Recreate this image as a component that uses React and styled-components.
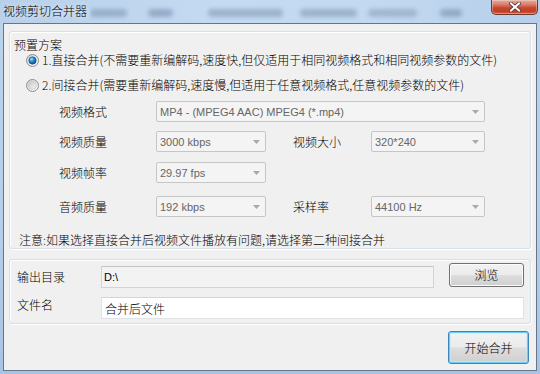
import React from "react";
import styled, { createGlobalStyle } from "styled-components";

const CJK = `"Noto Sans CJK SC", "Noto Sans", sans-serif`;
const UI = `"Liberation Sans", Arial, sans-serif`;

const Global = createGlobalStyle`
  html, body { margin: 0; padding: 0; background: #fff; }
  body { width: 540px; height: 374px; overflow: hidden; }
  * { box-sizing: border-box; }
`;

const Window = styled.div`
  width: 540px;
  height: 374px;
  display: flex;
  flex-direction: column;
  background: linear-gradient(to bottom, #bcd3ec 0%, #b6cee9 60%, #a9c3e3 100%);
  font-family: ${CJK};
  font-size: 12px;
  font-weight: 300;
  color: #000;
`;

const TitleBar = styled.div`
  height: 23px;
  flex: none;
  display: flex;
  align-items: flex-start;
  padding-left: 3px;
  background: linear-gradient(to right, #b9d0ea 0%, #c4daf2 40%, #c3d9f1 70%, #b6cee9 100%);
`;

const TitleText = styled.div`
  width: 87px;
  margin-top: 4px;
  line-height: 14px;
  white-space: nowrap;
  text-shadow: 0 0 5px rgba(255, 255, 255, 0.9);
`;

const Ghosts = styled.div`
  flex: 1;
  height: 23px;
  display: flex;
  align-items: center;
  overflow: hidden;
`;

const Ghost = styled.div`
  flex: none;
  width: ${(p) => p.$w}px;
  margin-left: ${(p) => p.$gap}px;
  height: 8px;
  margin-top: 2px;
  border-radius: 4px;
  background: rgba(95, 120, 150, ${(p) => p.$o});
  filter: blur(2px);
`;

const CloseBtn = styled.div`
  flex: none;
  width: 47px;
  height: 15px;
  margin-right: 2px;
  border: 1px solid #6e3b32;
  border-top: none;
  border-radius: 0 0 5px 5px;
  display: flex;
  align-items: center;
  justify-content: center;
  background: linear-gradient(to bottom, #e8a898 0%, #d98470 30%, #c8492f 55%, #c23d24 80%, #d2634a 100%);
  box-shadow: inset 0 0 0 1px rgba(255, 255, 255, 0.3);
`;

const Frame = styled.div`
  flex: 1;
  display: flex;
  padding: 0 3px 3px 3px;
  min-height: 0;
`;

const Client = styled.div`
  flex: 1;
  display: flex;
  flex-direction: column;
  background: #f0f0f0;
  border: 1px solid #63768c;
  padding: 7px 5px 0 5px;
`;

const Group = styled.div`
  flex: none;
  height: ${(p) => p.$h}px;
  margin-top: ${(p) => p.$mt || 0}px;
  border: 1px solid #d5dfe5;
  border-radius: 3px;
  box-shadow: inset 1px 1px 0 #fff, 1px 1px 0 #fff;
  display: flex;
  flex-direction: column;
`;

const SectionTitle = styled.div`
  margin: 6px 0 0 4px;
  line-height: 14px;
`;

const RadioRow = styled.div`
  height: 16px;
  margin: ${(p) => p.$mt}px 0 0 16px;
  display: flex;
  align-items: center;
  white-space: nowrap;
`;

const RadioLabel = styled.span`
  margin-left: 3px;
  line-height: 14px;
`;

const FormRow = styled.div`
  height: 21px;
  margin: ${(p) => p.$mt}px 0 0 49px;
  display: grid;
  grid-template-columns: 97px 110px 27px 78px 114px;
  align-items: center;
`;

const FieldLabel = styled.div`
  line-height: 14px;
  grid-column: ${(p) => (p.$col ? `${p.$col} / span 1` : "auto")};
`;

const Combo = styled.div`
  height: 21px;
  grid-column: ${(p) => (p.$wide ? "2 / span 4" : "auto")};
  border: 1px solid #c6c6c6;
  border-radius: 2px;
  background: #f4f4f4;
  display: flex;
  align-items: center;
  justify-content: space-between;
  padding: 0 5px 0 3px;
  font-family: ${UI};
  font-size: 11px;
  font-weight: 400;
  color: #666666;
  white-space: nowrap;
`;

const Note = styled.div`
  margin: 16px 0 0 9px;
  line-height: 14px;
  white-space: nowrap;
`;

const OutRow = styled.div`
  display: flex;
  align-items: flex-start;
  margin-top: ${(p) => p.$mt}px;
  padding-left: 7px;
`;

const OutLabel = styled.div`
  width: 84px;
  flex: none;
  margin-top: ${(p) => p.$mt}px;
  line-height: 14px;
`;

const TextBox = styled.div`
  flex: none;
  width: ${(p) => p.$w}px;
  height: 22px;
  margin-top: ${(p) => p.$mt || 0}px;
  border: 1px solid ${(p) => (p.$disabled ? "#d3d3d3" : "#dfe3e8")};
  border-top-color: ${(p) => (p.$disabled ? "#c4c4c4" : "#d2d6dc")};
  background: ${(p) => (p.$disabled ? "#f3f3f3" : "#ffffff")};
  display: flex;
  align-items: center;
  padding-left: ${(p) => (p.$disabled ? 2 : 3)}px;
  font-family: ${(p) => (p.$disabled ? UI : CJK)};
  font-size: ${(p) => (p.$disabled ? 11 : 12)}px;
  font-weight: ${(p) => (p.$disabled ? 400 : 300)};
  color: #000;
`;

const Button = styled.div`
  flex: none;
  width: ${(p) => p.$w}px;
  height: ${(p) => p.$h}px;
  margin-left: ${(p) => p.$ml || 0}px;
  border: 1px solid ${(p) => (p.$default ? "#3c86c0" : "#707070")};
  border-radius: 3px;
  background: linear-gradient(to bottom, #f2f2f2 0%, #ebebeb 48%, #dddddd 52%, #cfcfcf 100%);
  box-shadow: ${(p) =>
    p.$default
      ? "inset 0 0 0 1px #6ccdf4, inset 0 0 0 2px rgba(200, 235, 250, 0.55)"
      : "inset 0 0 0 1px #fbfbfb"};
  display: flex;
  align-items: center;
  justify-content: center;
  line-height: 14px;
  white-space: nowrap;
`;

const ButtonRow = styled.div`
  display: flex;
  justify-content: flex-end;
  margin-top: 7px;
  padding-right: 2px;
`;

function Radio({ checked, id }) {
  return (
    <svg width="13" height="13" viewBox="0 0 13 13" style={{ flex: "none" }}>
      <defs>
        <linearGradient id={`${id}o`} x1="0" y1="0" x2="1" y2="1">
          <stop offset="0" stopColor="#d0d0d0" />
          <stop offset="1" stopColor="#ffffff" />
        </linearGradient>
        <radialGradient id={`${id}on`} cx="0.38" cy="0.32" r="0.75">
          <stop offset="0" stopColor="#a8e6ff" />
          <stop offset="0.4" stopColor="#2a92d8" />
          <stop offset="1" stopColor="#0a3f7a" />
        </radialGradient>
        <linearGradient id={`${id}off`} x1="0" y1="0" x2="1" y2="1">
          <stop offset="0" stopColor="#c8c8c8" />
          <stop offset="1" stopColor="#f6f6f6" />
        </linearGradient>
      </defs>
      <circle cx="6.5" cy="6.5" r="6" fill={`url(#${id}o)`} stroke="#8c8c8c" strokeWidth="1" />
      <circle
        cx="6.5"
        cy="6.5"
        r={checked ? 3.7 : 3.9}
        fill={checked ? `url(#${id}on)` : `url(#${id}off)`}
        stroke={checked ? "#174f86" : "#bdbdbd"}
        strokeWidth="0.6"
      />
    </svg>
  );
}

function Arrow() {
  return (
    <svg width="7" height="4" viewBox="0 0 7 4" style={{ flex: "none" }}>
      <polygon points="0,0 7,0 3.5,4" fill="#a9a9a9" />
    </svg>
  );
}

function CloseX() {
  return (
    <svg width="12" height="10" viewBox="0 0 12 10">
      <path d="M2 1.5 L10 8.5 M10 1.5 L2 8.5" stroke="#4a3a38" strokeWidth="3.6" strokeLinecap="square" />
      <path d="M2 1.5 L10 8.5 M10 1.5 L2 8.5" stroke="#ffffff" strokeWidth="2" strokeLinecap="square" />
    </svg>
  );
}

const ghosts = [
  { w: 37, gap: 0, o: 0.4 },
  { w: 25, gap: 21, o: 0.45 },
  { w: 75, gap: 35, o: 0.4 },
  { w: 57, gap: 17, o: 0.4 },
  { w: 49, gap: 11, o: 0.35 },
  { w: 22, gap: 23, o: 0.45 },
];

export default function App() {
  return (
    <>
      <Global />
      <Window>
        <TitleBar>
          <TitleText>视频剪切合并器</TitleText>
          <Ghosts>
            {ghosts.map((g, i) => (
              <Ghost key={i} $w={g.w} $gap={g.gap} $o={g.o} />
            ))}
          </Ghosts>
          <CloseBtn>
            <CloseX />
          </CloseBtn>
        </TitleBar>
        <Frame>
          <Client>
            <Group $h={218}>
              <SectionTitle>预置方案</SectionTitle>
              <RadioRow $mt={0}>
                <Radio checked id="r1" />
                <RadioLabel>1.直接合并(不需要重新编解码,速度快,但仅适用于相同视频格式和相同视频参数的文件)</RadioLabel>
              </RadioRow>
              <RadioRow $mt={9}>
                <Radio id="r2" />
                <RadioLabel>2.间接合并(需要重新编解码,速度慢,但适用于任意视频格式,任意视频参数的文件)</RadioLabel>
              </RadioRow>
              <FormRow $mt={8}>
                <FieldLabel>视频格式</FieldLabel>
                <Combo $wide>
                  <span>MP4 - (MPEG4 AAC) MPEG4 (*.mp4)</span>
                  <Arrow />
                </Combo>
              </FormRow>
              <FormRow $mt={9}>
                <FieldLabel>视频质量</FieldLabel>
                <Combo>
                  <span>3000 kbps</span>
                  <Arrow />
                </Combo>
                <FieldLabel $col={4}>视频大小</FieldLabel>
                <Combo>
                  <span>320*240</span>
                  <Arrow />
                </Combo>
              </FormRow>
              <FormRow $mt={10}>
                <FieldLabel>视频帧率</FieldLabel>
                <Combo>
                  <span>29.97 fps</span>
                  <Arrow />
                </Combo>
              </FormRow>
              <FormRow $mt={13}>
                <FieldLabel>音频质量</FieldLabel>
                <Combo>
                  <span>192 kbps</span>
                  <Arrow />
                </Combo>
                <FieldLabel $col={4}>采样率</FieldLabel>
                <Combo>
                  <span>44100 Hz</span>
                  <Arrow />
                </Combo>
              </FormRow>
              <Note>注意:如果选择直接合并后视频文件播放有问题,请选择第二种间接合并</Note>
            </Group>
            <Group $h={65} $mt={10}>
              <OutRow $mt={3}>
                <OutLabel $mt={7}>输出目录</OutLabel>
                <TextBox $w={333} $mt={3} $disabled>
                  D:\
                </TextBox>
                <Button $w={75} $h={24} $ml={15}>
                  浏览
                </Button>
              </OutRow>
              <OutRow $mt={9}>
                <OutLabel $mt={1}>文件名</OutLabel>
                <TextBox $w={423}>合并后文件</TextBox>
              </OutRow>
            </Group>
            <ButtonRow>
              <Button $w={81} $h={33} $default>
                开始合并
              </Button>
            </ButtonRow>
          </Client>
        </Frame>
      </Window>
    </>
  );
}
